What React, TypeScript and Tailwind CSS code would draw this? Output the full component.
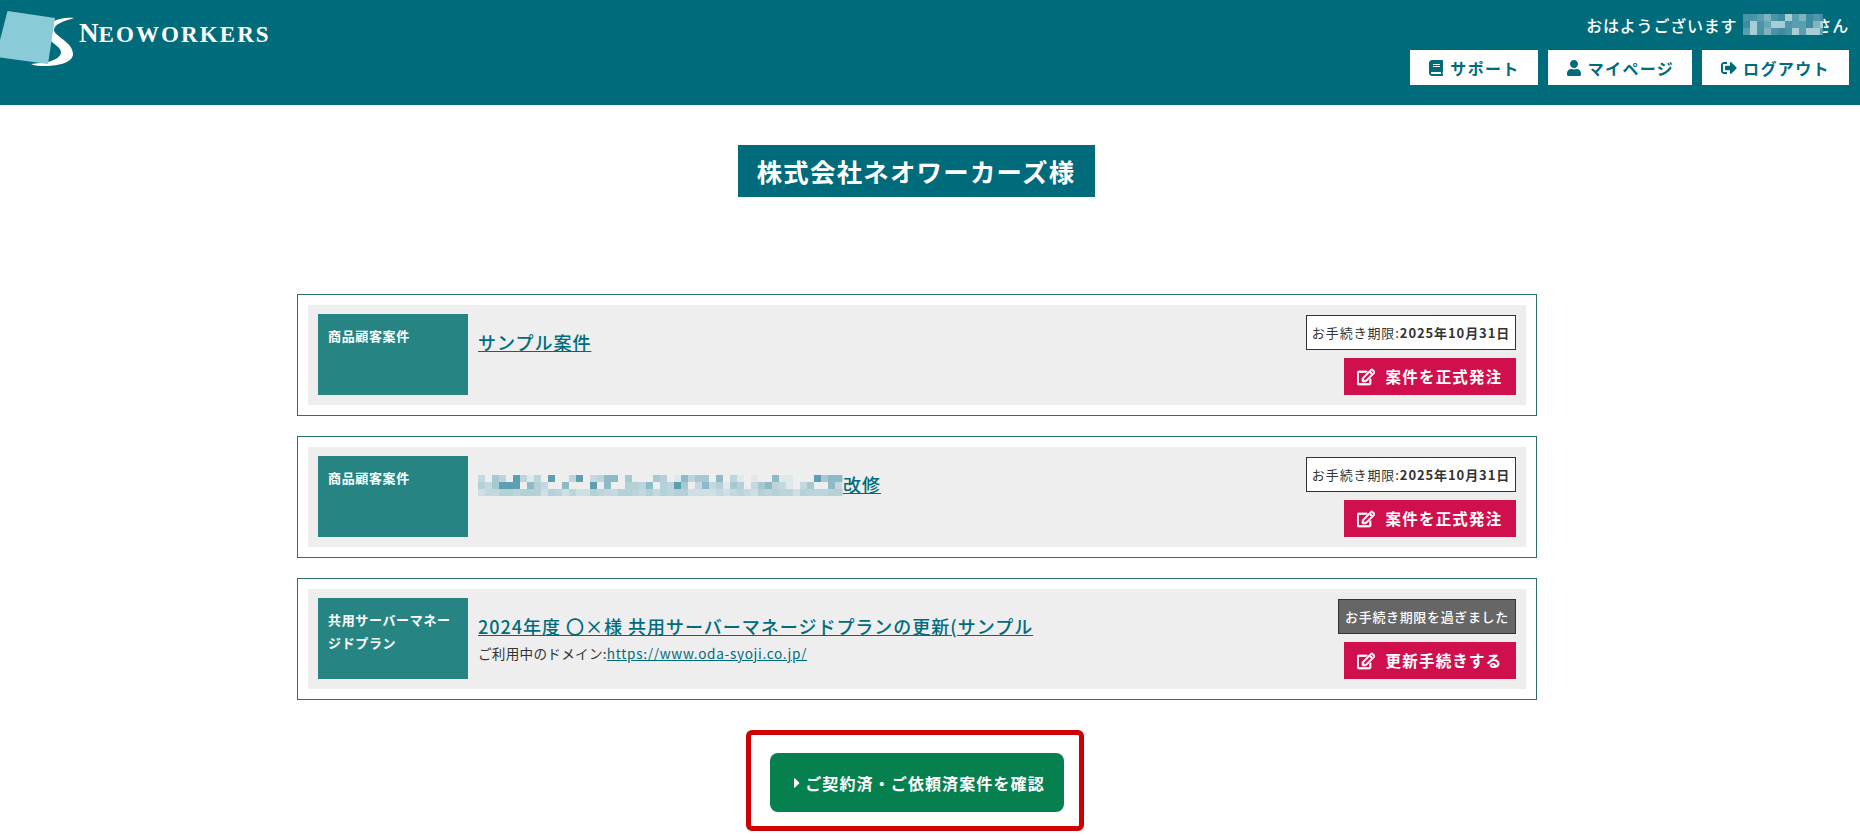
import { FaBook, FaUser, FaSignOutAlt, FaRegEdit, FaCaretRight } from "react-icons/fa";

const font = { fontFamily: '"Noto Sans CJK JP", "Noto Sans", sans-serif' };

function rng(seed: number) {
  let s = seed;
  return () => {
    s = (s * 16807) % 2147483647;
    return s / 2147483647;
  };
}

function Mosaic({ w, h, cell, colors, lastColors, seed, className }: { w: number; h: number; cell: number; colors: string[]; lastColors?: string[]; seed: number; className?: string }) {
  const r = rng(seed);
  const rects = [];
  for (let y = 0; y < h; y += cell) {
    const palette = lastColors && y + cell >= h ? lastColors : colors;
    for (let x = 0; x < w; x += cell) {
      rects.push(<rect key={`${x}-${y}`} x={x} y={y} width={cell} height={cell} fill={palette[Math.floor(r() * palette.length)]} />);
    }
  }
  return (
    <svg width={w} height={h} viewBox={`0 0 ${w} ${h}`} className={className}>
      {rects}
    </svg>
  );
}

function Logo() {
  return (
    <div className="flex items-start">
      <svg width="78" height="70" viewBox="0 0 78 70" className="shrink-0">
        <rect x="0" y="42" width="3" height="7" fill="#fff" />
        <path d="M74,18 C64,21 54,24 54,30 C54,36 73,42 73,54 C73,62 60,66 45,66 C40,66 35,66 31,64 L48,62 C55,60 61,57 61,52 C61,46 46,41 46,32 C46,22 60,17 74,18 Z" fill="#fff" />
        <polygon points="7.5,11 55,18 48,64 0,57.5 0,40" fill="#8acbd8" />
      </svg>
      <div className="mt-[16px] ml-[1px] flex items-baseline font-bold text-white leading-[34px]" style={{ fontFamily: '"Liberation Serif", serif' }}>
        <span className="text-[27px]">N</span>
        <span className="text-[23px] tracking-[2.1px]">EOWORKERS</span>
      </div>
    </div>
  );
}

function HeaderButton({ icon, label, w }: { icon: React.ReactNode; label: string; w: string }) {
  return (
    <a className={`flex h-[35px] items-center justify-center gap-[6px] bg-white text-[16px] font-bold tracking-[0.085em] text-[#006c7b] ${w}`}>
      {icon}
      <span>{label}</span>
    </a>
  );
}

function Card({ tag, title, badge, action, extra }: { tag: string; title: React.ReactNode; badge: React.ReactNode; action: string; extra?: React.ReactNode }) {
  return (
    <div className="w-full border border-[#2f6f6a] bg-white p-[10px]">
      <div className="flex h-[100px] bg-[#eeeeee] py-[9px] pr-[10px] pl-[10px]">
        <div className="h-[81px] w-[150px] shrink-0 bg-[#268583] px-[10px] pt-[10px] text-[13px] leading-[23px] font-bold tracking-[0.05em] text-white">{tag}</div>
        <div className="ml-[10px] flex-1 pt-[11px]">
          <div className="text-[18px] leading-[34px] font-medium tracking-[0.055em] text-[#006c7b]">{title}</div>
          {extra}
        </div>
        <div className="flex flex-col items-end gap-[8px] pt-[1px]">
          {badge}
          <a className="flex h-[37px] w-[172px] items-center justify-center gap-[10px] bg-[#d0104c] text-[15.5px] font-bold tracking-[0.08em] text-white">
            <FaRegEdit className="size-[18px] stroke-current stroke-[24px]" />
            <span>{action}</span>
          </a>
        </div>
      </div>
    </div>
  );
}

function DateBadge() {
  return (
    <div className="flex h-[35px] w-[210px] items-center justify-center border border-[#333333] bg-white text-[13px] tracking-[0.07em] text-[#333333]">
      お手続き期限:<b className="font-bold">2025年10月31日</b>
    </div>
  );
}

export default function App() {
  return (
    <div className="min-h-[836px] bg-white" style={font}>
      <header className="flex h-[105px] justify-between bg-[#006c7b]">
        <Logo />
        <div className="flex flex-col items-end pt-[14px] pr-[11px]">
          <div className="flex h-[21px] items-center text-[16px] font-medium tracking-[0.05em] text-white">
            <span>おはようございます</span>
            <Mosaic className="ml-[6px] -mr-[8px] relative" w={80} h={21} cell={7} seed={77} colors={["#4a94a8", "#5a9fb0", "#7fb3be", "#4f97aa", "#a9cdd5", "#6aa7b5", "#3f8ca2"]} />
            <span>さん</span>
          </div>
          <div className="mt-[15px] flex gap-[10px]">
            <HeaderButton w="w-[128px]" icon={<FaBook className="size-[16px]" />} label="サポート" />
            <HeaderButton w="w-[144px]" icon={<FaUser className="size-[16px]" />} label="マイページ" />
            <HeaderButton w="w-[147px]" icon={<FaSignOutAlt className="size-[16px]" />} label="ログアウト" />
          </div>
        </div>
      </header>

      <main className="flex w-[1834px] flex-col items-center">
        <h1 className="mt-[40px] mr-[2px] flex h-[52px] w-[357px] items-center justify-center bg-[#006c7b] text-[25.4px] font-bold tracking-[0.05em] text-white">株式会社ネオワーカーズ様</h1>

        <div className="mt-[97px] flex w-[1240px] flex-col gap-[20px]">
          <Card tag="商品顧客案件" title={<a className="underline">サンプル案件</a>} badge={<DateBadge />} action="案件を正式発注" />
          <Card
            tag="商品顧客案件"
            title={
              <span className="flex items-center">
                <Mosaic className="mt-[3px]" w={365} h={21} cell={7} seed={4242} colors={["#c3d9df", "#b4d1d8", "#a6c9d1", "#eeeeee", "#8dbac6", "#bcd5db", "#dfe9ec", "#5d9fb2", "#eeeeee"]} lastColors={["#c3d9df", "#bcd5db", "#b4d1d8", "#cfe0e4"]} />
                <a className="underline">改修</a>
              </span>
            }
            badge={<DateBadge />}
            action="案件を正式発注"
          />
          <Card
            tag="共用サーバーマネージドプラン"
            title={<a className="underline">2024年度 〇×様 共用サーバーマネージドプランの更新(サンプル</a>}
            extra={
              <div className="text-[13.6px] leading-[20px] tracking-[0.05em] text-[#333333]">
                <span className="tracking-[0.02em]">ご利用中のドメイン:</span>
                <a className="text-[#006c7b] underline">https://www.oda-syoji.co.jp/</a>
              </div>
            }
            badge={
              <div className="flex h-[35px] w-[178px] items-center justify-center border border-[#333333] bg-[#666666] text-[13px] font-medium tracking-[0.05em] text-white">お手続き期限を過ぎました</div>
            }
            action="更新手続きする"
          />
        </div>

        <div className="mt-[30px] mr-[4px] flex h-[101px] w-[338px] items-center justify-center rounded-[6px] border-[5px] border-[#cc0000] pt-[4px] pl-[4px]">
          <a className="flex h-[59px] w-[294px] items-center justify-center rounded-[8px] bg-[#078050] text-[16px] font-bold tracking-[0.07em] text-white">
            <FaCaretRight className="size-[16px]" />
            <span>ご契約済・ご依頼済案件を確認</span>
          </a>
        </div>
      </main>
    </div>
  );
}
